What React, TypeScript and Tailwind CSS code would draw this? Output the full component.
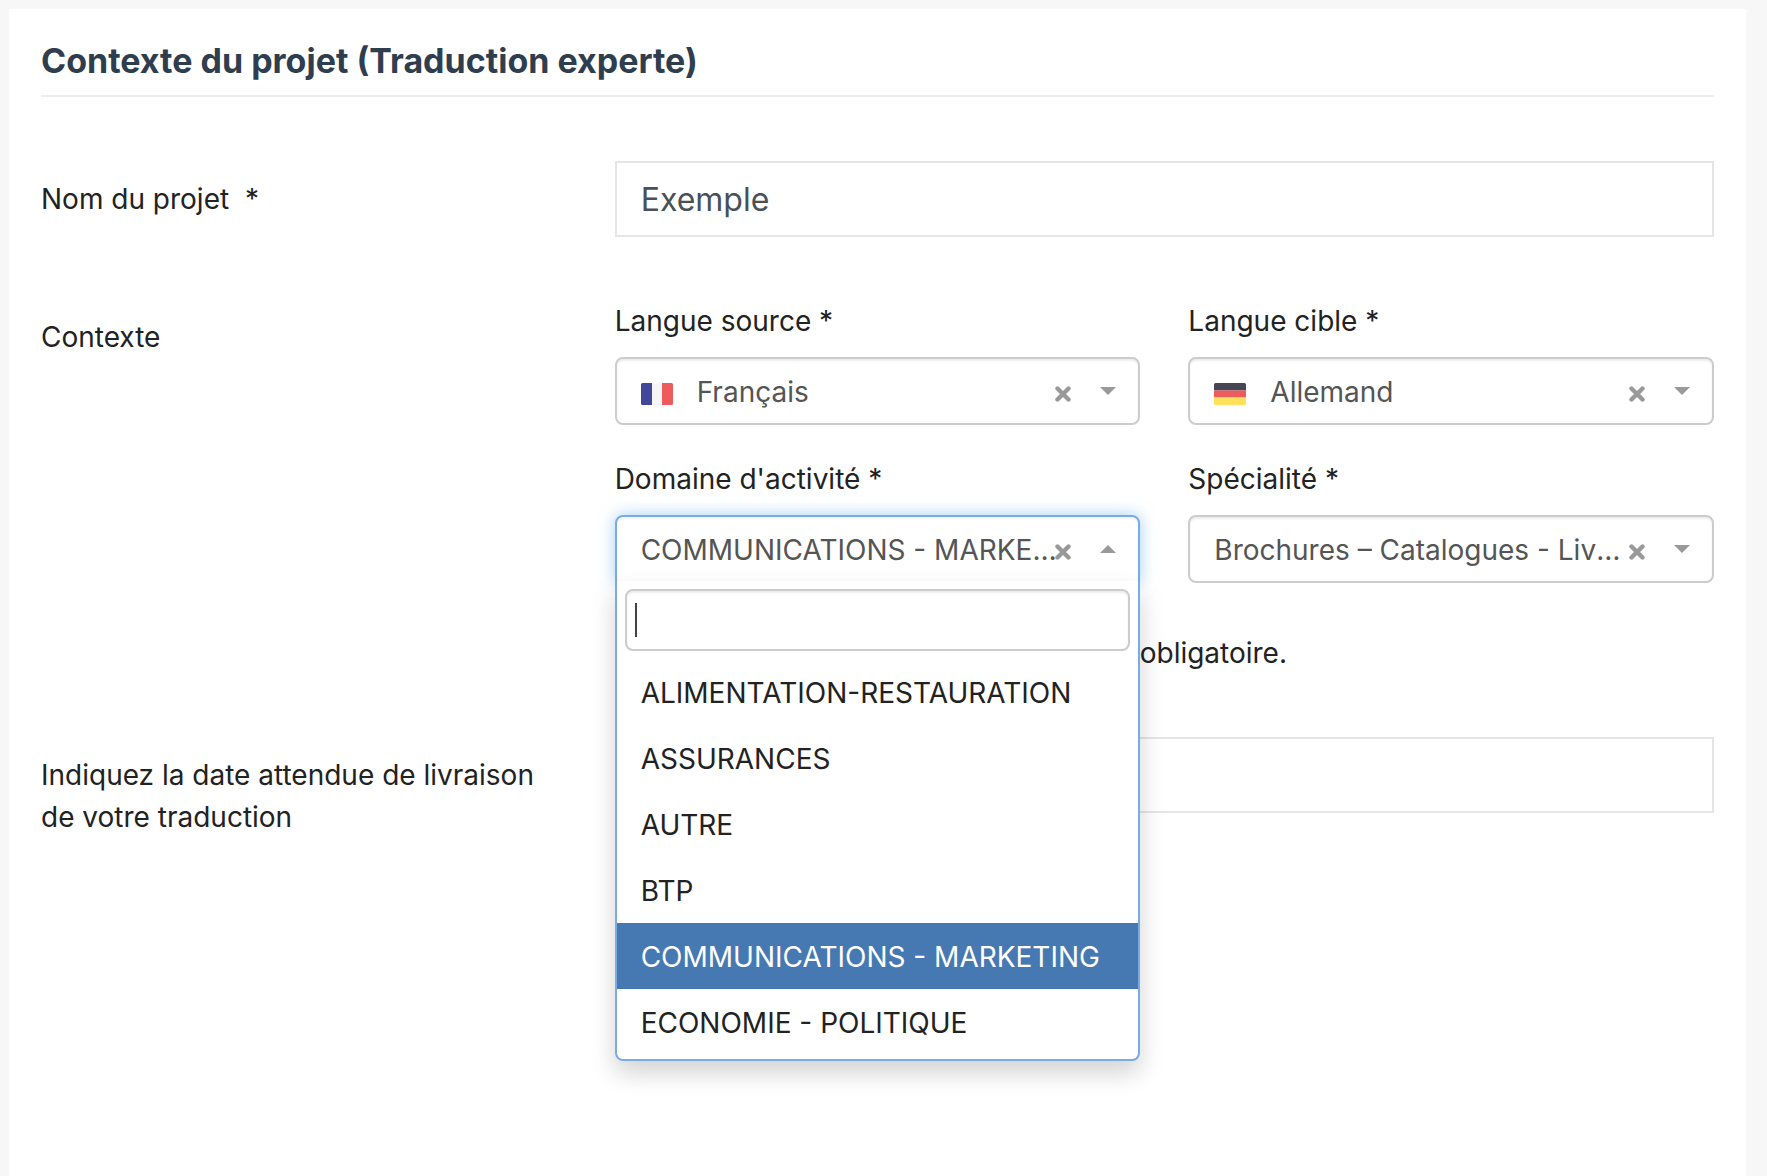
/**
 * ProjectContextForm
 * Project context step of an expert translation request
 */

import React, { useState } from 'react';

interface SelectFieldProps {
  id: string;
  label: string;
  value: string;
  options: string[];
  onChange: (value: string) => void;
  flag?: React.ReactNode;
  open?: boolean;
  children?: React.ReactNode;
}

const DOMAINS = [
  'ALIMENTATION-RESTAURATION',
  'ASSURANCES',
  'AUTRE',
  'BTP',
  'COMMUNICATIONS - MARKETING',
  'ECONOMIE - POLITIQUE'
];

const LANGUAGES = ['Français', 'Allemand'];

const SPECIALITIES = ['Brochures – Catalogues - Livrets'];

const FrenchFlag = () => (
  <svg viewBox="0 0 32 22" className="w-8 h-[22px]" aria-hidden="true">
    <path d="M1.5 0H11v22H1.5A1.5 1.5 0 0 1 0 20.500v-19A1.500 1.500 0 0 1 1.500 0z" fill="#41479b" />
    <path d="M11 0h10v22H11z" fill="#f5f5f5" />
    <path d="M21 0h9.500A1.500 1.500 0 0 1 32 1.500v19a1.500 1.500 0 0 1-1.500 1.500H21z" fill="#ef5a5c" />
  </svg>
);

const GermanFlag = () => (
  <svg viewBox="0 0 32 22" className="w-8 h-[22px]" aria-hidden="true">
    <path d="M1.500 0h29A1.500 1.500 0 0 1 32 1.500V7.500H0v-6A1.500 1.500 0 0 1 1.500 0z" fill="#464655" />
    <path d="M0 7.500h32v7H0z" fill="#ef5a5c" />
    <path d="M0 14.500h32v6a1.500 1.500 0 0 1-1.500 1.500h-29A1.500 1.500 0 0 1 0 20.500z" fill="#ffe15a" />
  </svg>
);

const FLAGS: Record<string, React.ReactNode> = {
  Français: <FrenchFlag />,
  Allemand: <GermanFlag />
};

const SelectField: React.FC<SelectFieldProps> = ({
  id,
  label,
  value,
  options,
  onChange,
  flag,
  open,
  children
}) => (
  <div className="min-w-0">
    <label htmlFor={id} className="block mb-[15px]">
      {label} *
    </label>
    <div className="relative">
      <select
        id={id}
        value={value}
        onChange={(e) => onChange(e.target.value)}
        className={`block w-full h-[68px] appearance-none truncate border-2 bg-white pt-0.5 text-[#555] outline-none ${
          flag ? 'pl-20' : 'pl-6'
        } ${
          open
            ? 'pr-20 rounded-t-lg border-[#78ace6] shadow-[inset_0_2px_2px_rgba(0,0,0,0.05),0_0_16px_rgba(102,175,233,0.6)]'
            : 'pr-[90px] rounded-lg border-[#ccc] shadow-[inset_0_2px_2px_rgba(0,0,0,0.075)]'
        }`}
      >
        <option value="" />
        {options.map((option) => (
          <option key={option} value={option}>
            {option}
          </option>
        ))}
      </select>
      {flag && <span className="pointer-events-none absolute left-[26px] top-[26px]">{flag}</span>}
      <button
        type="button"
        aria-label={`Effacer ${label}`}
        onClick={() => onChange('')}
        className="absolute right-[69px] top-[29px] cursor-pointer"
      >
        <svg viewBox="0 0 16 16" className="block size-4" aria-hidden="true">
          <path
            d="M2.500 2.500l11 11M13.500 2.500l-11 11"
            stroke="#999"
            strokeWidth="4.400"
            strokeLinecap="round"
          />
        </svg>
      </button>
      <svg
        viewBox="0 0 16 8"
        className="pointer-events-none absolute right-6 top-[30px] w-4 h-2"
        aria-hidden="true"
      >
        <path d={open ? 'M0 8L8 0l8 8z' : 'M0 0h16L8 8z'} fill="#999" />
      </svg>
      {children}
    </div>
  </div>
);

const App: React.FC = () => {
  const [name, setName] = useState('Exemple');
  const [source, setSource] = useState('Français');
  const [target, setTarget] = useState('Allemand');
  const [domain, setDomain] = useState('COMMUNICATIONS - MARKETING');
  const [speciality, setSpeciality] = useState(SPECIALITIES[0]);
  const [open, setOpen] = useState(true);
  const [search, setSearch] = useState('');
  const [date, setDate] = useState('');

  const filteredDomains = DOMAINS.filter((item) =>
    item.toLowerCase().includes(search.toLowerCase())
  );

  const handleSelectDomain = (item: string) => {
    setDomain(item);
    setOpen(false);
  };

  return (
    <div className="min-h-screen bg-[#f7f7f7] pt-[9px] pl-[9px] pr-[21px] font-['Inter','Liberation_Sans',sans-serif] text-[28px] leading-[42px] text-[#222]">
      <form className="min-h-[1167px] bg-white p-8">
        <h1 className="border-b-2 border-[#eee] pt-px pb-[15px] text-[34px] leading-[38px] font-bold text-[#2f3e4e]">
          Contexte du projet (Traduction experte)
        </h1>

        {/* Project name */}
        <div className="mt-16 grid grid-cols-3 gap-12">
          <label htmlFor="name" className="pt-[17px]">
            Nom du projet <span className="ml-2">*</span>
          </label>
          <input
            id="name"
            type="text"
            value={name}
            onChange={(e) => setName(e.target.value)}
            className="col-span-2 h-[76px] w-full border-2 border-[#e5e5e5] bg-white px-6 text-[32px] text-[#495057] outline-none"
          />
        </div>

        {/* Languages, domain and speciality */}
        <div className="mt-[63px] grid grid-cols-3 gap-12">
          <div className="pt-4">Contexte</div>
          <div className="col-span-2">
            <div className="grid grid-cols-2 gap-x-12 gap-y-[33px]">
              <SelectField
                id="source"
                label="Langue source"
                value={source}
                options={LANGUAGES}
                onChange={setSource}
                flag={FLAGS[source]}
              />
              <SelectField
                id="target"
                label="Langue cible"
                value={target}
                options={LANGUAGES}
                onChange={setTarget}
                flag={FLAGS[target]}
              />
              <SelectField
                id="domain"
                label="Domaine d'activité"
                value={domain}
                options={DOMAINS}
                onChange={setDomain}
                open={open}
              >
                {open && (
                  <div className="absolute inset-x-0 top-[66px] z-10 rounded-b-lg border-2 border-t-0 border-[#78ace6] bg-white pb-1 shadow-[0_12px_24px_rgba(0,0,0,0.175)]">
                    <div className="relative p-2">
                      <input
                        type="search"
                        aria-label="Rechercher un domaine"
                        value={search}
                        onChange={(e) => setSearch(e.target.value)}
                        className="block h-[62px] w-full rounded-lg border-2 border-[#ccc] px-2 caret-transparent shadow-[inset_0_2px_2px_rgba(0,0,0,0.075)] outline-none"
                      />
                      {!search && <span className="absolute left-[18px] top-[22px] h-[34px] w-0.5 bg-[#444]" />}
                    </div>
                    <ul role="listbox" aria-label="Domaine d'activité">
                      {filteredDomains.map((item) => (
                        <li key={item} role="option" aria-selected={item === domain}>
                          <button
                            type="button"
                            onClick={() => handleSelectDomain(item)}
                            className={`block w-full px-6 pt-[13px] pb-[11px] text-left whitespace-nowrap ${
                              item === domain ? 'bg-[#4679b2] text-white' : ''
                            }`}
                          >
                            {item}
                          </button>
                        </li>
                      ))}
                    </ul>
                  </div>
                )}
              </SelectField>
              <SelectField
                id="speciality"
                label="Spécialité"
                value={speciality}
                options={SPECIALITIES}
                onChange={setSpeciality}
              />
            </div>
            <p className="mt-[49px]">Le choix de mon domaine d'activité est obligatoire.</p>
          </div>
        </div>

        {/* Delivery date */}
        <div className="mt-[63px] grid grid-cols-3 gap-12">
          <label htmlFor="date" className="pt-[17px]">
            Indiquez la date attendue de livraison de votre traduction
          </label>
          <input
            id="date"
            type="text"
            value={date}
            onChange={(e) => setDate(e.target.value)}
            className="col-span-2 h-[76px] w-full border-2 border-[#e5e5e5] bg-white px-6 text-[32px] text-[#495057] outline-none"
          />
        </div>
      </form>
    </div>
  );
};

export default App;
